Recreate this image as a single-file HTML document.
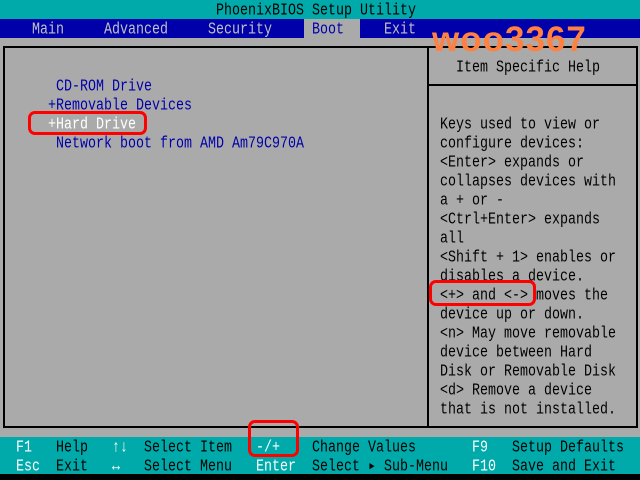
<!DOCTYPE html>
<html><head><meta charset="utf-8"><style>
*{margin:0;padding:0}
body{width:640px;height:480px;background:#000;position:relative;overflow:hidden;font-family:"Liberation Mono","DejaVu Sans Mono",monospace;font-size:13.33px}
.a{position:absolute}
.t{position:absolute;height:19px;line-height:19px;white-space:pre;transform:translateY(2px) scaleY(1.25);transform-origin:center}
.r{position:absolute;border:3px solid #f00;border-radius:7px}
</style></head><body>
<div class="a" style="left:0;top:0;width:640px;height:19px;background:#00aaaa"></div>
<div class="a" style="left:0;top:19px;width:640px;height:19px;background:#0000aa"></div>
<div class="a" style="left:0;top:38px;width:640px;height:399px;background:#aaaaaa"></div>
<div class="a" style="left:0;top:437px;width:640px;height:37px;background:#00aaaa"></div>
<div class="a" style="left:304px;top:19px;width:56px;height:19px;background:#aaaaaa"></div>
<!-- box -->
<div class="a" style="left:3px;top:46px;width:631px;height:378px;border:2px solid #000"></div>
<div class="a" style="left:427px;top:47px;width:2px;height:379px;background:#000"></div>
<div class="a" style="left:428px;top:84px;width:208px;height:2px;background:#000"></div>

<div class="t" style="left:216px;top:0;color:#000">PhoenixBIOS Setup Utility</div>
<div class="t" style="left:32px;top:19px;color:#c0c0c0">Main</div>
<div class="t" style="left:104px;top:19px;color:#c0c0c0">Advanced</div>
<div class="t" style="left:208px;top:19px;color:#c0c0c0">Security</div>
<div class="t" style="left:312px;top:19px;color:#0000aa">Boot</div>
<div class="t" style="left:384px;top:19px;color:#c0c0c0">Exit</div>
<div class="a" style="left:432px;top:20px;height:40px;line-height:40px;font-family:'Liberation Sans',sans-serif;font-weight:bold;font-size:35px;color:#ff8040;letter-spacing:1px">woo3367</div>

<div class="t" style="left:456px;top:57px;color:#000">Item Specific Help</div>
<div class="t" style="left:56px;top:76px;color:#0000aa">CD-ROM Drive</div>
<div class="t" style="left:48px;top:95px;color:#0000aa">+Removable Devices</div>
<div class="t" style="left:48px;top:114px;color:#fff">+Hard Drive</div>
<div class="t" style="left:56px;top:133px;color:#0000aa">Network boot from AMD Am79C970A</div>

<div class="t" style="left:440px;top:114px;color:#000">Keys used to view or</div>
<div class="t" style="left:440px;top:133px;color:#000">configure devices:</div>
<div class="t" style="left:440px;top:152px;color:#000">&lt;Enter&gt; expands or</div>
<div class="t" style="left:440px;top:171px;color:#000">collapses devices with</div>
<div class="t" style="left:440px;top:190px;color:#000">a + or -</div>
<div class="t" style="left:440px;top:209px;color:#000">&lt;Ctrl+Enter&gt; expands</div>
<div class="t" style="left:440px;top:228px;color:#000">all</div>
<div class="t" style="left:440px;top:247px;color:#000">&lt;Shift + 1&gt; enables or</div>
<div class="t" style="left:440px;top:266px;color:#000">disables a device.</div>
<div class="t" style="left:440px;top:285px;color:#000">&lt;+&gt; and &lt;-&gt; moves the</div>
<div class="t" style="left:440px;top:304px;color:#000">device up or down.</div>
<div class="t" style="left:440px;top:323px;color:#000">&lt;n&gt; May move removable</div>
<div class="t" style="left:440px;top:342px;color:#000">device between Hard</div>
<div class="t" style="left:440px;top:361px;color:#000">Disk or Removable Disk</div>
<div class="t" style="left:440px;top:380px;color:#000">&lt;d&gt; Remove a device</div>
<div class="t" style="left:440px;top:399px;color:#000">that is not installed.</div>

<div class="t" style="left:16px;top:437px;color:#fff">F1</div>
<div class="t" style="left:56px;top:437px;color:#000">Help</div>
<div class="t" style="left:112px;top:437px;color:#fff">↑↓</div>
<div class="t" style="left:144px;top:437px;color:#000">Select Item</div>
<div class="t" style="left:256px;top:437px;color:#fff">-/+</div>
<div class="t" style="left:312px;top:437px;color:#000">Change Values</div>
<div class="t" style="left:472px;top:437px;color:#fff">F9</div>
<div class="t" style="left:512px;top:437px;color:#000">Setup Defaults</div>
<div class="t" style="left:16px;top:456px;color:#fff">Esc</div>
<div class="t" style="left:56px;top:456px;color:#000">Exit</div>
<div class="t" style="left:112px;top:456px;color:#fff">↔</div>
<div class="t" style="left:144px;top:456px;color:#000">Select Menu</div>
<div class="t" style="left:256px;top:456px;color:#fff">Enter</div>
<div class="t" style="left:312px;top:456px;color:#000">Select ▸ Sub-Menu</div>
<div class="t" style="left:472px;top:456px;color:#fff">F10</div>
<div class="t" style="left:512px;top:456px;color:#000">Save and Exit</div>

<div class="r" style="left:28px;top:111px;width:113px;height:18px"></div>
<div class="r" style="left:429px;top:280px;width:101px;height:20px"></div>
<div class="r" style="left:248px;top:420px;width:45px;height:31px"></div>
</body></html>
